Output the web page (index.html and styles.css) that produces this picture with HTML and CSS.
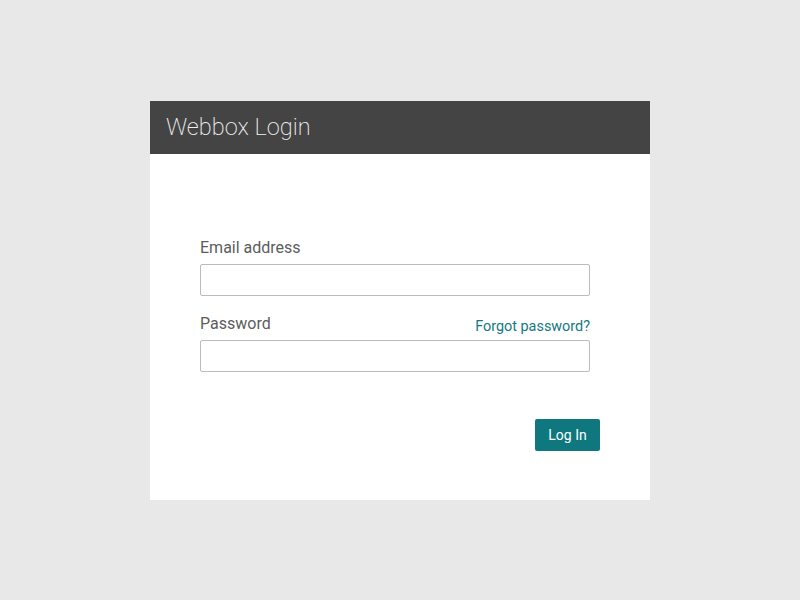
FILE: index.html
```html
<!DOCTYPE html>
<html>
<head>
<meta charset="utf-8">
<link rel="stylesheet" href="styles.css">
</head>
<body>
<div class="card">
  <div class="card-header"><h1 class="title">Webbox Login</h1></div>
  <form class="card-body">
    <div class="field">
      <div class="label-row"><label class="label">Email address</label></div>
      <input class="input" type="text">
    </div>
    <div class="field field-last">
      <div class="label-row"><label class="label">Password</label><a class="forgot" href="#">Forgot password?</a></div>
      <input class="input" type="password">
    </div>
    <div class="actions"><button class="btn" type="button">Log In</button></div>
  </form>
</div>
</body>
</html>
```
FILE: styles.css
```css
* { box-sizing: border-box; }
html, body { margin: 0; padding: 0; }
body {
  background: #e8e8e8;
  font-family: Roboto, "Liberation Sans", sans-serif;
  padding-top: 101px;
  height: 600px;
}
.card {
  width: 500px;
  margin: 0 auto;
  background: #fff;
}
.card-header {
  background: #444444;
  height: 53px;
  padding: 0 16px 2px 16px;
  display: flex;
  align-items: center;
}
.title {
  margin: 0;
  font-size: 23.5px;
  font-weight: 200;
  color: #f0f0f0;
  line-height: 28px;
}
.card-body {
  display: flex;
  flex-direction: column;
  padding: 84px 60px 49px 50px;
  margin: 0;
}
.field { display: flex; flex-direction: column; margin-bottom: 18px; }
.field-last { margin-bottom: 47px; }
.label-row {
  display: flex;
  justify-content: space-between;
  align-items: baseline;
  height: 20px;
  margin-bottom: 6px;
}
.label { font-size: 16px; color: #5c5c5c; line-height: 20px; }
.forgot { font-size: 14.4px; color: #13797e; text-decoration: none; position: relative; top: 2px; }
.input {
  height: 32px;
  border: 1px solid #bcbcbc;
  border-radius: 2px;
  background: #fff;
  font-family: inherit;
  font-size: 14px;
  outline: none;
}
.actions { display: flex; justify-content: flex-end; margin-right: -10px; }
.btn {
  height: 32px;
  width: 65px;
  border: none;
  border-radius: 2px;
  background: #0e787e;
  color: #fff;
  font-family: inherit;
  font-size: 14px;
  padding: 0;
}
```
